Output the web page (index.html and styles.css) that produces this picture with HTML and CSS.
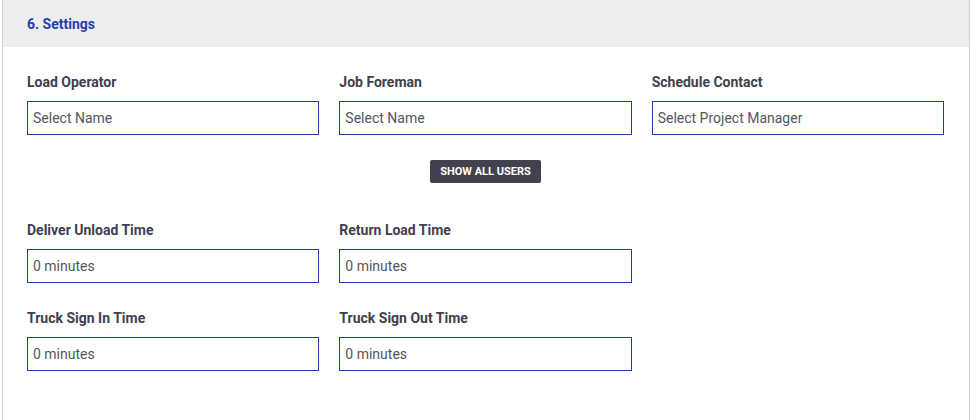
FILE: index.html
```html
<!DOCTYPE html>
<html>
<head>
<meta charset="utf-8">
<link rel="stylesheet" href="styles.css">
</head>
<body>
<div class="panel">
  <div class="panel-header">6. Settings</div>
  <div class="panel-body">
    <div class="row">
      <div class="field">
        <label class="label">Load Operator</label>
        <div class="input">Select Name</div>
      </div>
      <div class="field">
        <label class="label">Job Foreman</label>
        <div class="input">Select Name</div>
      </div>
      <div class="field">
        <label class="label">Schedule Contact</label>
        <div class="input">Select Project Manager</div>
      </div>
    </div>
    <div class="btn-row">
      <button class="btn">SHOW ALL USERS</button>
    </div>
    <div class="row row-second">
      <div class="field">
        <label class="label">Deliver Unload Time</label>
        <div class="input">0 minutes</div>
      </div>
      <div class="field">
        <label class="label">Return Load Time</label>
        <div class="input">0 minutes</div>
      </div>
    </div>
    <div class="row row-third">
      <div class="field">
        <label class="label">Truck Sign In Time</label>
        <div class="input">0 minutes</div>
      </div>
      <div class="field">
        <label class="label">Truck Sign Out Time</label>
        <div class="input">0 minutes</div>
      </div>
    </div>
  </div>
</div>
</body>
</html>
```

FILE: styles.css
```css
html, body {
  margin: 0;
  padding: 0;
  background: #ffffff;
  font-family: Roboto, "Liberation Sans", Arial, sans-serif;
}

.panel {
  margin-left: 2px;
  width: 968px;
  box-sizing: border-box;
  border-left: 1px solid #cdcde0;
  border-right: 1px solid #cdcde0;
  height: 420px;
}

.panel-header {
  height: 47px;
  box-sizing: border-box;
  background: #ededed;
  padding-left: 24px;
  display: flex;
  align-items: center;
  font-size: 14px;
  font-weight: 700;
  color: #1c3fae;
}

.panel-body {
  padding: 27px 25px 0 24px;
}

.row {
  display: grid;
  grid-template-columns: repeat(3, 1fr);
  column-gap: 20px;
}

.row-second {
  margin-top: 39px;
}

.row-third {
  margin-top: 27px;
}

.field {
  display: flex;
  flex-direction: column;
}

.label {
  font-size: 14px;
  line-height: 16px;
  font-weight: 700;
  color: #40404e;
  margin-bottom: 11px;
}

.input {
  height: 34px;
  box-sizing: border-box;
  border: 1px solid #1f43a3;
  padding-left: 5px;
  display: flex;
  align-items: center;
  font-size: 14px;
  color: #555560;
}

.btn-row {
  display: flex;
  justify-content: center;
  margin-top: 25px;
}

.btn {
  height: 23px;
  padding: 0 10px;
  border: none;
  border-radius: 2px;
  background: #42424f;
  color: #ffffff;
  font-family: Roboto, "Liberation Sans", Arial, sans-serif;
  font-size: 11px;
  font-weight: 700;
  letter-spacing: 0;
}
```
